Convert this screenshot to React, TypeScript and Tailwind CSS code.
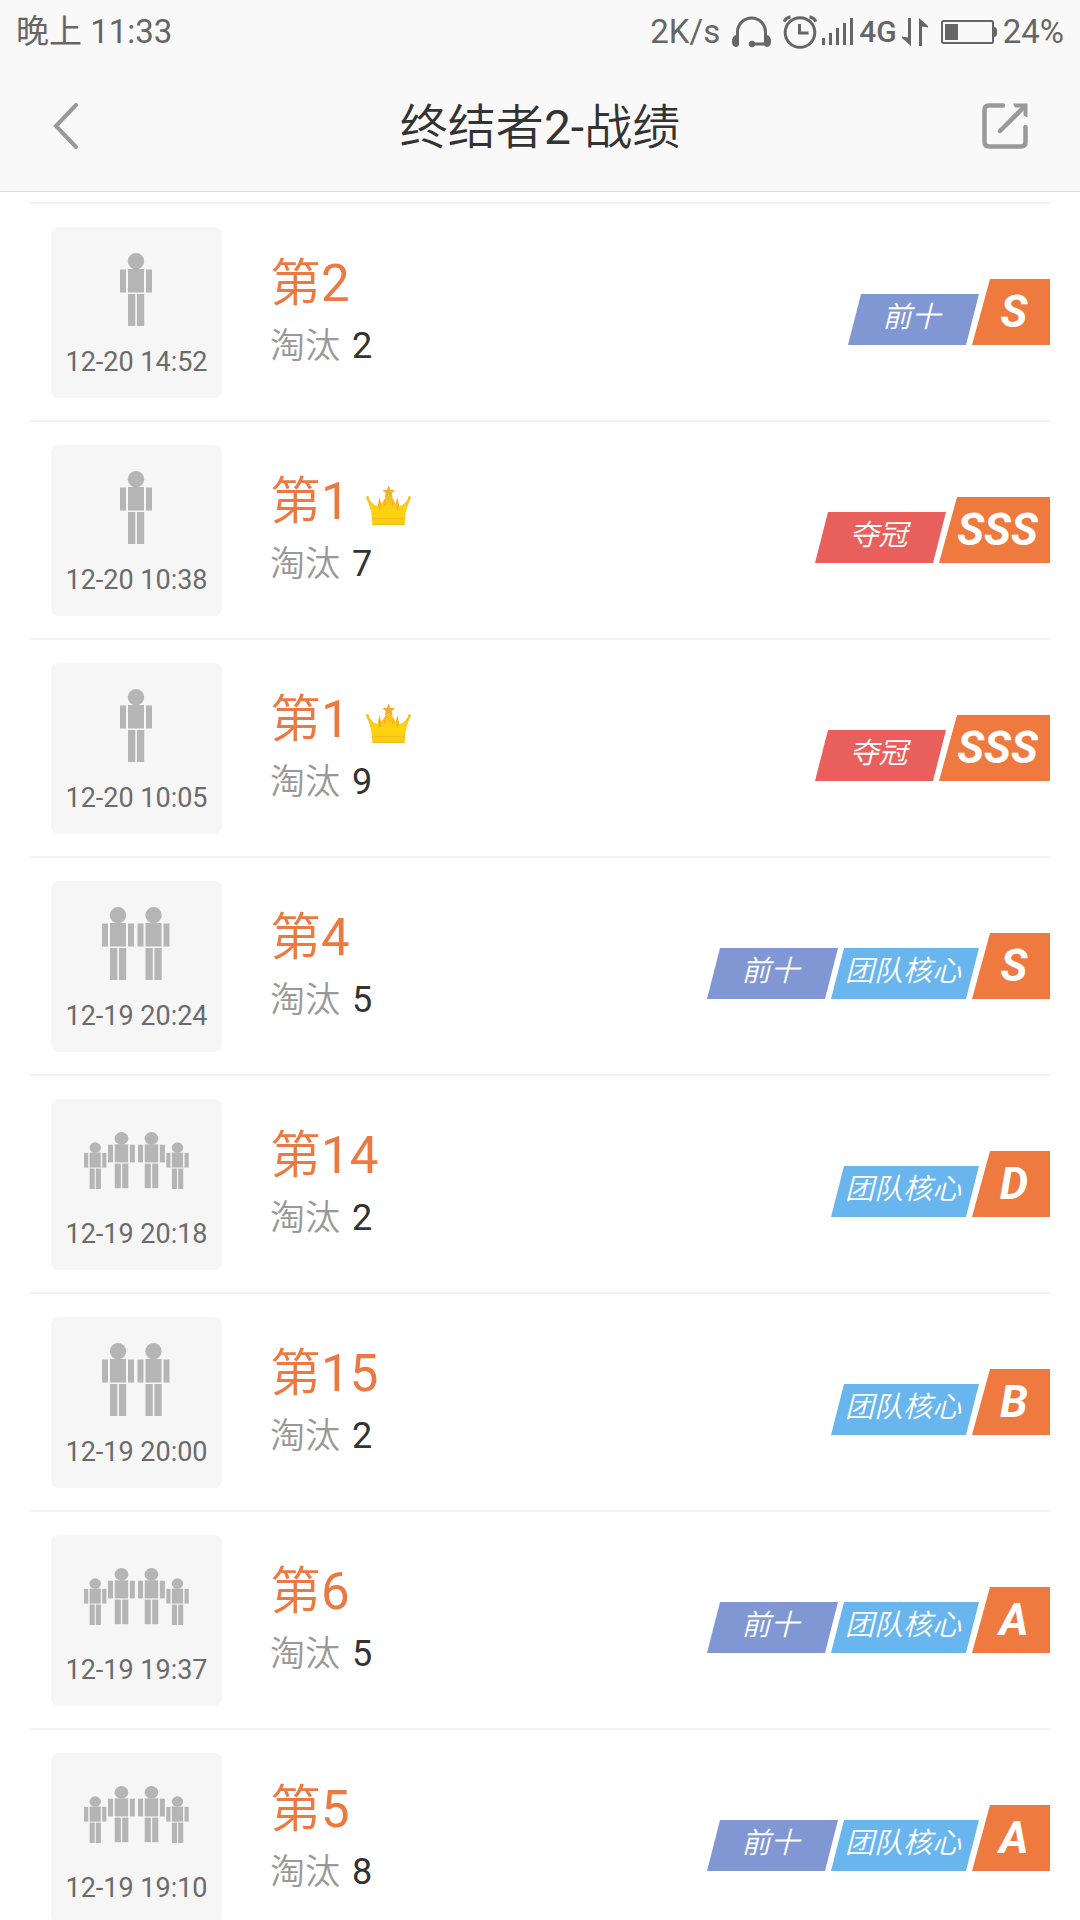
import React from 'react';

type Tag = 'top10' | 'champion' | 'core';

interface Match {
  time: string;
  players: 1 | 2 | 4;
  rank: number;
  kills: number;
  tags: Tag[];
  grade: string;
}

const matches: Match[] = [
  { time: '12-20 14:52', players: 1, rank: 2, kills: 2, tags: ['top10'], grade: 'S' },
  { time: '12-20 10:38', players: 1, rank: 1, kills: 7, tags: ['champion'], grade: 'SSS' },
  { time: '12-20 10:05', players: 1, rank: 1, kills: 9, tags: ['champion'], grade: 'SSS' },
  { time: '12-19 20:24', players: 2, rank: 4, kills: 5, tags: ['top10', 'core'], grade: 'S' },
  { time: '12-19 20:18', players: 4, rank: 14, kills: 2, tags: ['core'], grade: 'D' },
  { time: '12-19 20:00', players: 2, rank: 15, kills: 2, tags: ['core'], grade: 'B' },
  { time: '12-19 19:37', players: 4, rank: 6, kills: 5, tags: ['top10', 'core'], grade: 'A' },
  { time: '12-19 19:10', players: 4, rank: 5, kills: 8, tags: ['top10', 'core'], grade: 'A' },
];

const tagStyles: Record<Tag, { label: string; className: string }> = {
  top10: { label: '前十', className: 'w-[131px] bg-[#8197d3]' },
  champion: { label: '夺冠', className: 'w-[131px] bg-[#e95f5b]' },
  core: { label: '团队核心', className: 'w-[148px] bg-[#69b6ee]' },
};

const Person: React.FC<{ transform?: string }> = ({ transform }) => (
  <g transform={transform}>
    <circle cx="16" cy="8.3" r="8.2" />
    <rect x="0" y="16.5" width="6" height="23" />
    <rect x="8" y="16" width="16" height="23.5" />
    <rect x="26" y="16.5" width="6" height="23" />
    <rect x="8" y="41" width="7.3" height="32" />
    <rect x="16.9" y="41" width="7.3" height="32" />
  </g>
);

const TeamIcon: React.FC<{ players: Match['players'] }> = ({ players }) => {
  if (players === 1) {
    return <svg width="33" height="74" viewBox="0 0 33 74" fill="#b5b5b5"><Person /></svg>;
  }
  if (players === 2) {
    return (
      <svg width="69" height="74" viewBox="0 0 69 74" fill="#b5b5b5">
        <Person />
        <Person transform="translate(35.5 0)" />
      </svg>
    );
  }
  return (
    <svg width="105" height="60" viewBox="0 0 105 60" fill="#b5b5b5">
      <Person transform="translate(0 10.3) scale(0.7 0.64)" />
      <Person transform="translate(24 0) scale(0.84 0.77)" />
      <Person transform="translate(54 0) scale(0.84 0.77)" />
      <Person transform="translate(82.3 10.3) scale(0.7 0.64)" />
    </svg>
  );
};

const Crown = () => (
  <svg width="45" height="46" viewBox="0 4 45 46">
    <defs>
      <linearGradient id="gold" x1="0" y1="0" x2="0" y2="1">
        <stop offset="0" stopColor="#f6bd20" />
        <stop offset="0.5" stopColor="#fdd50c" />
        <stop offset="1" stopColor="#fbcb14" />
      </linearGradient>
    </defs>
    <path fill="url(#gold)" d="M6.500 50L5.500 40Q4 30 0.500 24Q-0.500 21 1.800 21Q3.200 21.500 3 23.500Q6 30 12 31L13.300 22.500L15.500 29L18.500 24L21 21H24.500L27 24L29.500 29L31.500 22.500L33 31Q39 30 42 23.500Q41.800 21.500 43.200 21Q45.500 21 44.500 24Q41 30 39.500 40L38.500 50Z" />
    <path fill="#f2b02a" d="M22.700 10.500L24.400 14.700L29 15.200L25.600 18.200L26.800 22.800L22.700 20.600L18.600 22.800L19.800 18.200L16.400 15.200L21 14.700Z" />
    <path fill="#f6ae2c" d="M13.300 22.500L15 29L14 36L12 31ZM31.500 22.500L33 31L31 36L30 29ZM18.500 25L20 28L19 32L17.500 28ZM27 25L28 28L26.500 32L25.500 28Z" />
    <path fill="#f7bd1c" d="M6 43H39V44.200H6ZM6.400 48.700H38.600V50H6.400Z" />
  </svg>
);

const StatusBar = () => (
  <div className="flex h-15 items-center justify-between px-4 pt-1 text-[33px] leading-10 text-[#666]">
    <span>晚上 11:33</span>
    <div className="flex items-center gap-3">
      <span>2K/s</span>
      <svg width="39" height="34" viewBox="0 0 39 34" fill="#666">
        <path d="M5.500 23V17A14 14 0 0 1 33.500 17V23M20 29H34" fill="none" stroke="#666" strokeWidth="3" />
        <path d="M4 20H7V30Q6 32 4 32Q0 31.500 0 26.500Q0 21 4 20ZM35 20H32V30Q33 32 35 32Q39 31.500 39 26.500Q39 21 35 20Z" />
        <circle cx="20" cy="29" r="3.200" />
      </svg>
      <div className="flex items-center gap-[5px]">
        <svg width="34" height="34" viewBox="0 0 34 34" fill="none" stroke="#666" strokeWidth="3">
          <circle cx="17" cy="17.500" r="14.800" />
          <path d="M16.500 9V18H25.500M1 6.500Q3 2.800 7.500 1.700M33 6.500Q31 2.800 26.500 1.700" />
        </svg>
        <svg width="32" height="28" viewBox="0 0 32 28" fill="#666">
          <path d="M0 20H3V27H0ZM7 15H10V27H7ZM14 10H17V27H14ZM21 5H24V27H21ZM28 0H31V27H28Z" />
        </svg>
        <span className="text-[30px] font-medium">4G</span>
        <svg width="27" height="28" viewBox="0 0 27 28" fill="#666">
          <path d="M6 0H9V28L0 20V18.500L6 19.500ZM17 28V0L26 8V9.500L20 8.500V28Z" />
        </svg>
      </div>
      <div className="flex items-center gap-[6px]">
        <svg width="56" height="24" viewBox="0 0 56 24" fill="#666">
          <rect x="1" y="1" width="51" height="22" rx="1.500" fill="none" stroke="#666" strokeWidth="2" />
          <rect x="4" y="4" width="13" height="16" />
          <path d="M52 7H54L56 9V15L54 17H52Z" />
        </svg>
        <span>24%</span>
      </div>
    </div>
  </div>
);

const MatchRow: React.FC<{ match: Match }> = ({ match }) => (
  <li className="flex h-[218px] items-center border-b-2 border-[#f3f3f3] pl-[21px]">
    <div className="flex size-[171px] flex-col items-center rounded-lg bg-[#f6f6f6] pt-[26px]">
      <div className="flex h-[74px] items-center">
        <TeamIcon players={match.players} />
      </div>
      <time className="mt-[17px] text-[27px] leading-9 text-[#6b6b6b]">{match.time}</time>
    </div>
    <div className="ml-12 pt-[6px]">
      <h2 className="flex items-center gap-4 text-[51px] leading-[62px] text-[#ec7842]">
        <span><span className="font-[350]">第</span>{match.rank}</span>
        {match.rank === 1 && <Crown />}
      </h2>
      <p className="flex items-baseline gap-3 leading-[62px]">
        <span className="text-[35px] font-[350] text-[#999]">淘汰</span>
        <span className="text-4xl leading-[62px] text-[#333]">{match.kills}</span>
      </p>
    </div>
    <div className="ml-auto flex items-end text-white italic">
      {match.tags.map(tag => (
        <span
          key={tag}
          className={`-mr-[7px] h-[51px] pr-1 text-center text-[29px] leading-[46px] font-[350] [clip-path:polygon(13px_0,100%_0,calc(100%-13px)_100%,0_100%)] ${tagStyles[tag].className}`}
        >
          {tagStyles[tag].label}
        </span>
      ))}
      <strong
        className={`h-[66px] bg-[#ee7a3f] pl-[6px] text-center text-[45px] leading-[66px] font-bold [clip-path:polygon(18px_0,100%_0,100%_100%,0_100%)] ${match.grade.length > 1 ? 'w-[111px]' : 'w-[78px]'}`}
      >
        {match.grade}
      </strong>
    </div>
  </li>
);

export default function App() {
  return (
    <div className="flex h-screen flex-col overflow-hidden bg-white font-['Roboto','Noto_Sans_CJK_SC',sans-serif]">
      <header className="shrink-0 border-b border-[#dedede] bg-[#f9f9f9]">
        <StatusBar />
        <nav className="flex h-[131px] items-center justify-between px-[52px]">
          <button aria-label="返回" className="w-[46px]">
            <svg width="26" height="46" viewBox="0 0 26 46" fill="none" stroke="#999" strokeWidth="4" strokeLinecap="round">
              <path d="M24 2L4 23L24 44" />
            </svg>
          </button>
          <h1 className="pt-1 text-5xl text-[#333]">
            <span className="font-[350]">终结者</span>2-<span className="font-[350]">战绩</span>
          </h1>
          <button aria-label="分享">
            <svg width="46" height="46" viewBox="0 0 46 46" fill="none" stroke="#999" strokeWidth="4.5" strokeLinecap="round">
              <path d="M21 2.500H7Q2.500 2.500 2.500 7V39Q2.500 43.500 7 43.500H39Q43.500 43.500 43.500 39V24M18 28L42 4" />
              <path d="M31 0.500H45.500V14.500L41.500 12.500V7L38 4.500H33Z" fill="#999" stroke="none" />
            </svg>
          </button>
        </nav>
      </header>
      <main className="min-h-0 flex-1 overflow-y-auto px-[30px] pt-[10px] [scrollbar-width:none]">
        <ul className="border-t-2 border-[#f3f3f3]">
          {matches.map(match => (
            <MatchRow key={match.time} match={match} />
          ))}
        </ul>
      </main>
    </div>
  );
}
